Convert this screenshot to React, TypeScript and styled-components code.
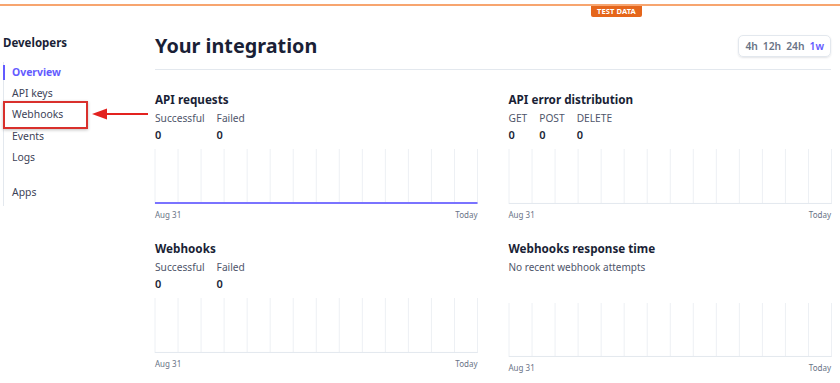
import React from 'react';
import styled, { createGlobalStyle } from 'styled-components';

const GlobalStyle = createGlobalStyle`
  html, body {
    margin: 0;
    padding: 0;
    background: #ffffff;
  }
  body {
    font-family: 'Noto Sans', 'Open Sans', sans-serif;
    color: #1a1f36;
  }
`;

const Frame = styled.div`
  position: relative;
  width: 840px;
  height: 383px;
  overflow: hidden;
  padding-top: 4px;
  box-sizing: border-box;
`;

const TestStrip = styled.div`
  border-top: 2px solid #f7a56f;
  display: flex;
  height: 11px;
`;

const Badge = styled.div`
  margin-left: 591px;
  width: 51px;
  height: 11px;
  background: #e5661b;
  color: #ffffff;
  font-size: 7.5px;
  font-weight: 700;
  line-height: 11px;
  text-align: center;
  border-radius: 0 0 2px 2px;
  letter-spacing: 0.1px;
`;

const Layout = styled.div`
  display: flex;
`;

const Sidebar = styled.aside`
  width: 155px;
  flex-shrink: 0;
  padding: 18px 0 0 3px;
  box-sizing: border-box;
`;

const SideTitle = styled.div`
  font-size: 11.5px;
  font-weight: 700;
  line-height: 16px;
  color: #1a1f36;
`;

const Nav = styled.nav`
  margin-top: 11px;
  border-left: 1px solid #e3e8ee;
  padding-bottom: 3px;
  display: flex;
  flex-direction: column;
`;

const NavItem = styled.div<{ $active?: boolean; $gap?: boolean }>`
  position: relative;
  padding-left: 8px;
  height: 21.2px;
  line-height: 21px;
  font-size: 10.4px;
  margin-top: ${(p) => (p.$gap ? '14px' : '0')};
  color: ${(p) => (p.$active ? '#635bff' : '#3c4257')};
  font-weight: ${(p) => (p.$active ? 700 : 400)};

  &::before {
    content: '';
    display: ${(p) => (p.$active ? 'block' : 'none')};
    position: absolute;
    left: -1px;
    top: 3px;
    bottom: 3px;
    width: 2px;
    background: #635bff;
  }
`;

const Main = styled.main`
  flex: 1;
  padding: 15px 9px 0 0;
  min-width: 0;
`;

const Header = styled.header`
  display: flex;
  align-items: center;
  justify-content: space-between;
  padding-bottom: 9px;
  border-bottom: 1px solid #e3e8ee;
`;

const Title = styled.h1`
  margin: 0;
  font-size: 19.8px;
  line-height: 28px;
  font-weight: 700;
  color: #1a1f36;
`;

const RangeToggle = styled.div`
  display: flex;
  align-items: center;
  gap: 5px;
  height: 20px;
  padding: 0 6px;
  border: 1px solid #e3e8ee;
  border-radius: 5px;
  box-shadow: 0 1px 2px rgba(60, 66, 87, 0.14);
`;

const RangeOption = styled.span<{ $active?: boolean }>`
  font-size: 10.3px;
  font-weight: 600;
  color: ${(p) => (p.$active ? '#635bff' : '#697386')};
`;

const Grid = styled.div`
  display: grid;
  grid-template-columns: 1fr 1fr;
  column-gap: 31px;
  row-gap: 18px;
  margin-top: 20px;
`;

const Card = styled.section`
  display: flex;
  flex-direction: column;
`;

const CardTitle = styled.h2`
  margin: 0;
  font-size: 11.7px;
  line-height: 18px;
  font-weight: 700;
  color: #1a1f36;
`;

const Stats = styled.div`
  display: flex;
  gap: 12px;
  margin-top: 2px;
`;

const Stat = styled.div`
  display: flex;
  flex-direction: column;
`;

const StatLabel = styled.span`
  font-size: 10.2px;
  line-height: 16px;
  color: #4f566b;
`;

const StatValue = styled.span`
  font-size: 11px;
  line-height: 18px;
  font-weight: 600;
  color: #1a1f36;
`;

const Note = styled.div`
  margin-top: 2px;
  font-size: 10px;
  line-height: 16px;
  color: #4f566b;
`;

const ChartBox = styled.div<{ $offset: number }>`
  margin-top: ${(p) => p.$offset}px;
  height: 55px;
`;

const Axis = styled.div`
  display: flex;
  justify-content: space-between;
  margin-top: 5px;
  font-size: 8px;
  line-height: 12px;
  color: #697386;
`;

const Callout = styled.div`
  position: absolute;
  left: 3px;
  top: 101px;
  width: 85px;
  height: 28px;
  box-sizing: border-box;
  border: 2px solid #d9302c;
  box-shadow: 0 1px 3px rgba(0, 0, 0, 0.25);
`;

const Pointer = styled.svg`
  position: absolute;
  left: 92px;
  top: 108px;
`;

const columns = 14;

function ChartGrid({ accent }: { accent?: boolean }) {
  return (
    <svg width="100%" height="100%" style={{ display: 'block', overflow: 'visible' }}>
      {Array.from({ length: columns + 1 }).map((_, i) => (
        <line
          key={i}
          x1={`${(i / columns) * 100}%`}
          x2={`${(i / columns) * 100}%`}
          y1="0"
          y2="100%"
          stroke="#edf0f4"
          strokeWidth="1"
        />
      ))}
      <line
        x1="0"
        x2="100%"
        y1={accent ? '98%' : '99%'}
        y2={accent ? '98%' : '99%'}
        stroke={accent ? '#7a73ff' : '#e3e8ee'}
        strokeWidth={accent ? 2 : 1}
      />
    </svg>
  );
}

function Chart({ accent, offset = 5, height }: { accent?: boolean; offset?: number; height?: number }) {
  return (
    <>
      <ChartBox $offset={offset} style={height ? { height } : undefined}>
        <ChartGrid accent={accent} />
      </ChartBox>
      <Axis>
        <span>Aug 31</span>
        <span>Today</span>
      </Axis>
    </>
  );
}

function StatRow({ labels }: { labels: string[] }) {
  return (
    <Stats>
      {labels.map((l) => (
        <Stat key={l}>
          <StatLabel>{l}</StatLabel>
          <StatValue>0</StatValue>
        </Stat>
      ))}
    </Stats>
  );
}

export default function App() {
  return (
    <>
      <GlobalStyle />
      <Frame>
        <TestStrip>
          <Badge>TEST DATA</Badge>
        </TestStrip>
        <Layout>
          <Sidebar>
            <SideTitle>Developers</SideTitle>
            <Nav>
              <NavItem $active>Overview</NavItem>
              <NavItem>API keys</NavItem>
              <NavItem>Webhooks</NavItem>
              <NavItem>Events</NavItem>
              <NavItem>Logs</NavItem>
              <NavItem $gap>Apps</NavItem>
            </Nav>
          </Sidebar>
          <Main>
            <Header>
              <Title>Your integration</Title>
              <RangeToggle>
                <RangeOption>4h</RangeOption>
                <RangeOption>12h</RangeOption>
                <RangeOption>24h</RangeOption>
                <RangeOption $active>1w</RangeOption>
              </RangeToggle>
            </Header>
            <Grid>
              <Card>
                <CardTitle>API requests</CardTitle>
                <StatRow labels={['Successful', 'Failed']} />
                <Chart accent />
              </Card>
              <Card>
                <CardTitle>API error distribution</CardTitle>
                <StatRow labels={['GET', 'POST', 'DELETE']} />
                <Chart />
              </Card>
              <Card>
                <CardTitle>Webhooks</CardTitle>
                <StatRow labels={['Successful', 'Failed']} />
                <Chart />
              </Card>
              <Card>
                <CardTitle>Webhooks response time</CardTitle>
                <Note>No recent webhook attempts</Note>
                <Chart offset={28} height={54} />
              </Card>
            </Grid>
          </Main>
        </Layout>
        <Callout />
        <Pointer width="56" height="12" viewBox="0 0 56 12">
          <path d="M0 6 L15 0.5 L15 11.5 Z" fill="#e3221f" />
          <rect x="14" y="5" width="42" height="2" fill="#e3221f" />
        </Pointer>
      </Frame>
    </>
  );
}
